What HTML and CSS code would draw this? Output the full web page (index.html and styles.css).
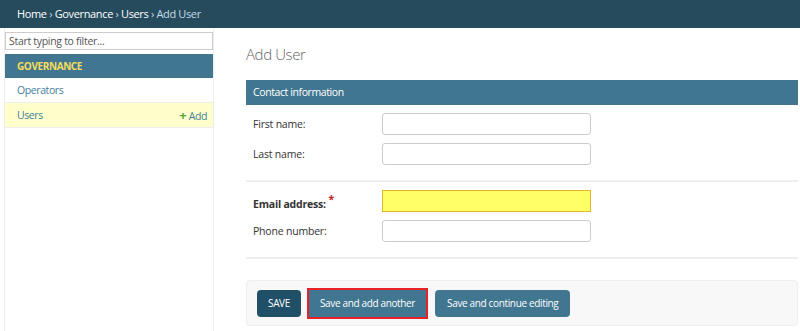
FILE: index.html
```html
<!DOCTYPE html>
<html lang="en">

<head>
    <meta charset="UTF-8">
    <title>Add User | Governance</title>
    <link rel="stylesheet" href="styles.css">
</head>

<body>

    <div class="breadcrumbs">
        <a href="#">Home</a> &rsaquo; <a href="#">Governance</a> &rsaquo; <a href="#">Users</a> &rsaquo; Add User
    </div>

    <div class="main">
        <nav class="sidebar">
            <input type="search" class="nav-filter" placeholder="Start typing to filter...">
            <div class="app-caption">GOVERNANCE</div>
            <div class="model-row">
                <a href="#">Operators</a>
            </div>
            <div class="model-row current">
                <a href="#">Users</a>
                <a href="#" class="addlink"><span class="plus">+</span> Add</a>
            </div>
        </nav>

        <div class="content">
            <h1>Add User</h1>

            <fieldset class="module">
                <h2>Contact information</h2>
                <div class="group">
                    <div class="form-row">
                        <label>First name:</label>
                        <input type="text">
                    </div>
                    <div class="form-row">
                        <label>Last name:</label>
                        <input type="text">
                    </div>
                </div>
                <div class="group">
                    <div class="form-row">
                        <label class="required">Email address:</label>
                        <input type="text" class="highlight">
                    </div>
                    <div class="form-row">
                        <label>Phone number:</label>
                        <input type="text">
                    </div>
                </div>
            </fieldset>

            <div class="submit-row">
                <button class="default">SAVE</button>
                <button class="marked">Save and add another</button>
                <button>Save and continue editing</button>
            </div>
        </div>
    </div>

</body>

</html>
```

FILE: styles.css
```css
body {
    margin: 0;
    font-family: "Open Sans", "Noto Sans", sans-serif;
    font-size: 11px;
    color: #333;
    background-color: #fff;
}

a {
    color: #447e9b;
    text-decoration: none;
}

.breadcrumbs {
    height: 28px;
    line-height: 28px;
    padding: 0 17px;
    background-color: #264b5d;
    color: #c4dce8;
    font-size: 11px;
    letter-spacing: -0.35px;
}

.breadcrumbs a {
    color: #fff;
}

.main {
    display: flex;
    min-height: 303px;
}

.sidebar {
    width: 208px;
    margin-left: 4px;
    border-left: 1px solid #eee;
    border-right: 1px solid #eee;
    padding-top: 4px;
}

.nav-filter {
    display: block;
    box-sizing: border-box;
    width: 100%;
    height: 18px;
    margin: 0 0 4px;
    padding: 0 3px;
    border: 1px solid #ccc;
    font-family: inherit;
    font-size: 10.5px;
    letter-spacing: -0.3px;
    color: #333;
}

.nav-filter::placeholder {
    color: #555;
}

.app-caption {
    height: 24px;
    line-height: 24px;
    padding-left: 12px;
    background-color: #417690;
    color: #f5dd5d;
    font-weight: bold;
    font-size: 10px;
    letter-spacing: -0.4px;
}

.model-row {
    display: flex;
    justify-content: space-between;
    height: 24px;
    line-height: 24px;
    padding: 0 6px 0 12px;
    border-bottom: 1px solid #eee;
    font-size: 10.5px;
    letter-spacing: -0.4px;
}

.model-row.current {
    background-color: #ffffcc;
}

.addlink {
    color: #447e9b;
}

.plus {
    color: #5ba337;
    font-weight: bold;
    font-size: 13px;
}

.content {
    flex: 1;
    padding: 0 2px 0 32px;
}

h1 {
    margin: 16px 0 16px;
    font-size: 15px;
    font-weight: 300;
    letter-spacing: -0.4px;
    color: #666;
}

.module {
    margin: 0;
    padding: 0;
    border: none;
}

.module h2 {
    margin: 0;
    height: 25px;
    line-height: 25px;
    padding-left: 7px;
    background-color: #417690;
    color: #fff;
    font-size: 10.5px;
    font-weight: normal;
    letter-spacing: -0.4px;
}

.group {
    display: flex;
    flex-direction: column;
    gap: 8px;
    padding: 8px 0 15px;
    border-bottom: 2px solid #eee;
}

.form-row {
    display: flex;
    align-items: center;
}

.form-row label {
    width: 129px;
    padding-left: 7px;
    font-size: 10.5px;
    letter-spacing: -0.2px;
    color: #333;
}

.form-row label.required {
    font-weight: bold;
}

.form-row label.required::after {
    content: " *";
    color: #ba2121;
    vertical-align: 5px;
}

.form-row input {
    box-sizing: border-box;
    width: 209px;
    height: 22px;
    border: 1px solid #ccc;
    border-radius: 3px;
}

.form-row input.highlight {
    background-color: #ffff66;
    border-color: #e0b82a;
    border-radius: 0;
}

.submit-row {
    display: flex;
    align-items: center;
    gap: 6px;
    margin-top: 21px;
    padding: 0 10px;
    height: 44px;
    background-color: #f8f8f8;
    border: 1px solid #eee;
    border-radius: 4px;
}

.submit-row button {
    height: 27px;
    padding: 0 11px;
    background-color: #417690;
    color: #fff;
    border: none;
    border-radius: 4px;
    font-family: inherit;
    font-size: 10px;
    letter-spacing: -0.35px;
}

.submit-row button.default {
    background-color: #205067;
}

.submit-row button.marked {
    outline: 2px solid #e8202a;
    border-radius: 0;
    margin: 0 3px 0 2px;
}

.submit-row button:last-child {
    padding: 0 12px;
}
```
